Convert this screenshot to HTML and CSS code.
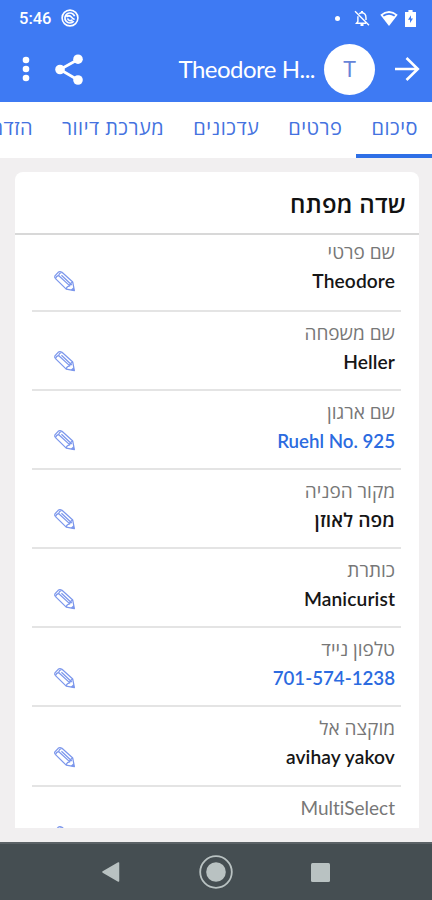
FILE: index.html
```html
<!DOCTYPE html>
<html lang="he" dir="rtl">
<head>
    <meta charset="UTF-8">
    <meta name="viewport" content="width=device-width, initial-scale=1.0">
    <title>Theodore Heller</title>
    <link rel="stylesheet" href="styles.css">
</head>
<body>
    <!-- Shared icons -->
    <svg class="sprite" width="0" height="0">
        <symbol id="pencil" viewBox="0 0 24 24">
            <g fill="none" stroke="currentColor" stroke-width="1.3" stroke-linejoin="round">
                <path d="M2 6.2 5.4 2.4Q7 1.2 9.4 2.3L20.6 12.6 22.3 21.6 13.8 20 2.6 9Q1.2 7.4 2 6.2Z"/>
                <path d="M2.8 8.7Q3.4 6 5.8 5.8 6.2 3.4 9 2.6M5.8 5.8 17.6 16.6M8.8 5.5 19.6 15.6M13.8 20Q14.2 17 17.4 16.6 17.6 13.6 20.6 12.6"/>
            </g>
            <path d="M22.3 21.6 18.4 20.8 21.6 17.8Z" fill="currentColor"/>
        </symbol>
    </svg>

    <header class="top">
        <div class="status-bar">
            <div class="status-left">
                <span class="clock">5:46</span>
                <svg width="18" height="18" viewBox="0 0 18 18" fill="none" stroke="#fff">
                    <circle cx="9" cy="9" r="7.9" stroke-width="1.6"/>
                    <path d="M12.8 12.2A5 5 0 1 1 13.6 7.2M5.4 7.8Q8.4 5.6 10.4 8T13.6 10.2M6.6 9.4A3 3 0 0 0 11.4 11" stroke-width="1.7"/>
                </svg>
            </div>
            <div class="status-right">
                <span class="dot"></span>
                <svg class="bell" width="16" height="17" viewBox="0 0 16 17" fill="none" stroke="#fff" stroke-width="1.4">
                    <path d="M5.2 3.8Q8 1.6 10.8 4Q12 5.3 12 8V10M3.9 6.3V11.5L2.5 13.2H12M1 1.3 15 15.3"/>
                    <path d="M6.5 15H9.5M8 1V3" stroke-width="2"/>
                </svg>
                <svg class="wifi" width="18" height="17" viewBox="0 0 18 17">
                    <path d="M.3 4.8Q9-2.6 17.7 4.8L9 16Z" fill="#fff"/>
                    <path d="M2.8 5Q9 .8 15.2 5L14.2 6.4Q9 3.2 3.8 6.4Z" fill="#3e7af3"/>
                </svg>
                <svg width="11" height="17" viewBox="0 0 11 17">
                    <path d="M3.4 0H7.6V2H11V17H0V2H3.4Z" fill="#fff"/>
                    <path d="M6 5.2 3 9.8H5V13L8 8.6H6Z" fill="#3e7af3"/>
                </svg>
            </div>
        </div>
        <div class="toolbar">
            <svg class="menu" width="8" height="26" viewBox="0 0 8 26" fill="#fff">
                <circle cx="4" cy="4" r="3.3"/><circle cx="4" cy="13" r="3.3"/><circle cx="4" cy="22" r="3.3"/>
            </svg>
            <svg class="share" width="28" height="31" viewBox="0 0 28 31">
                <path d="M23 5.5 5 15.5 23 26" fill="none" stroke="#fff" stroke-width="2.8"/>
                <g fill="#fff"><circle cx="23" cy="5.2" r="4.8"/><circle cx="5" cy="15.5" r="4.8"/><circle cx="23" cy="26" r="4.8"/></g>
            </svg>
            <h1 class="name">Theodore H...</h1>
            <div class="avatar">T</div>
            <svg class="forward" width="26" height="26" viewBox="0 0 26 26" fill="none" stroke="#fff" stroke-width="2.6">
                <path d="M1 13H23.5M12.5 2 23.8 13 12.5 24"/>
            </svg>
        </div>
    </header>

    <nav class="tabs">
        <a class="tab active">סיכום</a>
        <a class="tab">פרטים</a>
        <a class="tab">עדכונים</a>
        <a class="tab">מערכת דיוור</a>
        <a class="tab">הזדמנויות</a>
    </nav>

    <main class="content">
        <section class="card">
            <h2 class="card-title">שדה מפתח</h2>
            <div class="fields">
                <div class="field">
                    <div class="label">שם פרטי</div>
                    <div class="line"><span class="value">Theodore</span><svg class="edit"><use href="#pencil"/></svg></div>
                </div>
                <div class="field">
                    <div class="label">שם משפחה</div>
                    <div class="line"><span class="value">Heller</span><svg class="edit"><use href="#pencil"/></svg></div>
                </div>
                <div class="field">
                    <div class="label">שם ארגון</div>
                    <div class="line"><span class="value link" dir="ltr">Ruehl No. 925</span><svg class="edit"><use href="#pencil"/></svg></div>
                </div>
                <div class="field">
                    <div class="label">מקור הפניה</div>
                    <div class="line"><span class="value">מפה לאוזן</span><svg class="edit"><use href="#pencil"/></svg></div>
                </div>
                <div class="field">
                    <div class="label">כותרת</div>
                    <div class="line"><span class="value">Manicurist</span><svg class="edit"><use href="#pencil"/></svg></div>
                </div>
                <div class="field">
                    <div class="label">טלפון נייד</div>
                    <div class="line"><span class="value link" dir="ltr">701-574-1238</span><svg class="edit"><use href="#pencil"/></svg></div>
                </div>
                <div class="field">
                    <div class="label">מוקצה אל</div>
                    <div class="line"><span class="value">avihay yakov</span><svg class="edit"><use href="#pencil"/></svg></div>
                </div>
                <div class="field">
                    <div class="label">MultiSelect</div>
                    <div class="line"><span class="value"></span><svg class="edit"><use href="#pencil"/></svg></div>
                </div>
            </div>
        </section>
    </main>

    <footer class="nav-bar">
        <svg width="18" height="20" viewBox="0 0 18 20"><path d="M16.5 1V19L1 10Z" fill="#b9c2c2" stroke="#b9c2c2" stroke-width="1.5" stroke-linejoin="round"/></svg>
        <svg width="34" height="34" viewBox="0 0 34 34"><circle cx="17" cy="17" r="15.8" fill="none" stroke="#b9c2c2" stroke-width="1.8"/><circle cx="17" cy="17" r="9.8" fill="#b9c2c2"/></svg>
        <svg width="19" height="19" viewBox="0 0 19 19"><rect width="19" height="19" rx="1.5" fill="#b9c2c2"/></svg>
    </footer>
</body>
</html>
```
FILE: styles.css
```css
* {
    box-sizing: border-box;
}
body {
    margin: 0;
    height: 900px;
    display: flex;
    flex-direction: column;
    overflow: hidden;
    background-color: #f1eff0;
    font-family: Lato, "Open Sans", sans-serif;
    font-variant-ligatures: none;
}
svg {
    display: block;
    flex: none;
}
.sprite {
    position: absolute;
}

/* Blue header */
.top {
    direction: ltr;
    height: 102px;
    flex: none;
    background-color: #3e7af3;
    color: white;
}
.status-bar {
    height: 36px;
    padding: 0 16px 0 19px;
    display: flex;
    justify-content: space-between;
    align-items: center;
}
.status-left, .status-right {
    display: flex;
    align-items: center;
}
.status-left {
    gap: 10px;
}
.clock {
    font: 500 16.5px Roboto, sans-serif;
}
.dot {
    width: 5px;
    height: 5px;
    border-radius: 50%;
    background-color: white;
    margin-right: 14px;
}
.bell {
    margin-right: 10px;
}
.wifi {
    margin-right: 7px;
}
.toolbar {
    height: 66px;
    padding: 0 12px 0 22px;
    display: flex;
    align-items: center;
}
.share {
    margin-left: 25px;
}
.name {
    margin: 0 9px 0 auto;
    font-size: 24px;
    font-weight: 400;
    line-height: 30px;
    letter-spacing: -0.5px;
}
.avatar {
    width: 51px;
    height: 51px;
    border-radius: 50%;
    background-color: white;
    color: #6684d8;
    font: 22px/51px Roboto, sans-serif;
    text-align: center;
    margin-right: 19px;
}

/* Tabs */
.tabs {
    height: 56px;
    flex: none;
    display: flex;
    overflow: hidden;
    background-color: white;
}
.tab {
    flex: none;
    padding: 11px 14px 0 15px;
    color: #4472e0;
    font-size: 20px;
    line-height: 28px;
    letter-spacing: 0.5px;
    white-space: nowrap;
}
.tab.active {
    border-bottom: 4px solid #2e6fe6;
}

/* Card */
.content {
    height: 684px;
    padding: 14px 13px 14px 15px;
    flex: none;
}
.card {
    height: 656px;
    overflow: hidden;
    border-radius: 8px 8px 0 0;
    background-color: white;
}
.card-title {
    margin: 0;
    height: 63px;
    padding: 2px 13px 0;
    border-bottom: 2px solid #d8d8d8;
    color: #111;
    font-size: 24px;
    font-weight: 600;
    line-height: 60px;
    letter-spacing: 0.3px;
}
.fields {
    padding: 0 18px 0 17px;
}
.field {
    height: 79.2px;
    padding: 7px 6px 0 21px;
    border-bottom: 2px solid #e4e4e4;
}
.field:first-child {
    height: 76.5px;
    padding-top: 3px;
}
.label {
    height: 28px;
    color: #777;
    font-size: 19px;
    line-height: 28px;
}
.line {
    height: 30px;
    display: flex;
    justify-content: space-between;
    align-items: center;
}
.value {
    color: #161616;
    font-size: 19.2px;
    font-weight: 600;
    line-height: 30px;
    letter-spacing: 0.1px;
}
.value.link {
    color: #2c6be0;
    font-size: 18.7px;
    letter-spacing: 0;
}
.edit {
    width: 23px;
    height: 23px;
    color: #7c97ec;
}

/* Android buttons */
.nav-bar {
    direction: ltr;
    height: 58px;
    flex: none;
    padding: 0 102px;
    border-top: 2px solid #5b6266;
    background-color: #454e52;
    display: flex;
    justify-content: space-between;
    align-items: center;
}
```
